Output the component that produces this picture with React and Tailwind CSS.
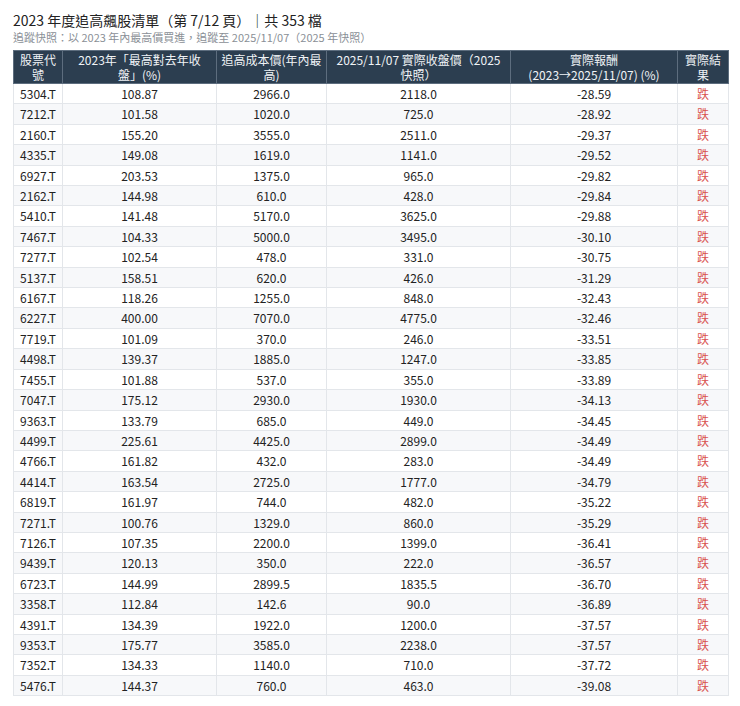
const rows = [
["5304.T","108.87","2966.0","2118.0","-28.59"],
["7212.T","101.58","1020.0","725.0","-28.92"],
["2160.T","155.20","3555.0","2511.0","-29.37"],
["4335.T","149.08","1619.0","1141.0","-29.52"],
["6927.T","203.53","1375.0","965.0","-29.82"],
["2162.T","144.98","610.0","428.0","-29.84"],
["5410.T","141.48","5170.0","3625.0","-29.88"],
["7467.T","104.33","5000.0","3495.0","-30.10"],
["7277.T","102.54","478.0","331.0","-30.75"],
["5137.T","158.51","620.0","426.0","-31.29"],
["6167.T","118.26","1255.0","848.0","-32.43"],
["6227.T","400.00","7070.0","4775.0","-32.46"],
["7719.T","101.09","370.0","246.0","-33.51"],
["4498.T","139.37","1885.0","1247.0","-33.85"],
["7455.T","101.88","537.0","355.0","-33.89"],
["7047.T","175.12","2930.0","1930.0","-34.13"],
["9363.T","133.79","685.0","449.0","-34.45"],
["4499.T","225.61","4425.0","2899.0","-34.49"],
["4766.T","161.82","432.0","283.0","-34.49"],
["4414.T","163.54","2725.0","1777.0","-34.79"],
["6819.T","161.97","744.0","482.0","-35.22"],
["7271.T","100.76","1329.0","860.0","-35.29"],
["7126.T","107.35","2200.0","1399.0","-36.41"],
["9439.T","120.13","350.0","222.0","-36.57"],
["6723.T","144.99","2899.5","1835.5","-36.70"],
["3358.T","112.84","142.6","90.0","-36.89"],
["4391.T","134.39","1922.0","1200.0","-37.57"],
["9353.T","175.77","3585.0","2238.0","-37.57"],
["7352.T","134.33","1140.0","710.0","-37.72"],
["5476.T","144.37","760.0","463.0","-39.08"],
];

const headers = [
  ["股票代", "號"],
  ["2023年「最高對去年收", "盤」(%)"],
  ["追高成本價(年內最", "高)"],
  ["2025/11/07 實際收盤價（2025", "快照）"],
  ["實際報酬", "(2023→2025/11/07) (%)"],
  ["實際結", "果"],
];

export default function App() {
  const font = { fontFamily: '"Noto Sans CJK TC", "Noto Sans", sans-serif' };
  const th = "border border-[#5d6d7e] px-[2px] py-[1px] leading-[15px] font-normal text-[12px] text-[#f0f3f6] text-center align-middle whitespace-nowrap overflow-hidden";
  const td = "border border-[#e3e6ea] px-[4px] py-0 leading-[19.4px] text-[12px] text-[#222222] text-center";
  return (
    <div className="bg-white w-[740px] h-[706px] pl-[13px] pt-[10px]" style={font}>
      <div className="text-[14px] leading-[20px] text-[#222222]">2023 年度追高飆股清單（第 7/12 頁）｜共 353 檔</div>
      <div className="text-[11px] leading-[14px] text-[#8a8f96] mb-[6px]">追蹤快照：以 2023 年內最高價買進，追蹤至 2025/11/07（2025 年快照）</div>
      <table className="border-collapse w-[715px] table-fixed">
        <colgroup>
          <col className="w-[49px]" />
          <col className="w-[154px]" />
          <col className="w-[110px]" />
          <col className="w-[184px]" />
          <col className="w-[167px]" />
          <col className="w-[51px]" />
        </colgroup>
        <thead>
          <tr className="bg-[#2c3e50]">
            {headers.map((h, i) => (
              <th key={i} className={th}>{h[0]}<br />{h[1]}</th>
            ))}
          </tr>
        </thead>
        <tbody>
          {rows.map((r, i) => (
            <tr key={i} className={i % 2 === 1 ? "bg-[#f7f8fa]" : "bg-white"}>
              <td className={td}>{r[0]}</td>
              <td className={td}>{r[1]}</td>
              <td className={td}>{r[2]}</td>
              <td className={td}>{r[3]}</td>
              <td className={td}>{r[4]}</td>
              <td className={td + " !text-[#d9534f]"}>跌</td>
            </tr>
          ))}
        </tbody>
      </table>
    </div>
  );
}
